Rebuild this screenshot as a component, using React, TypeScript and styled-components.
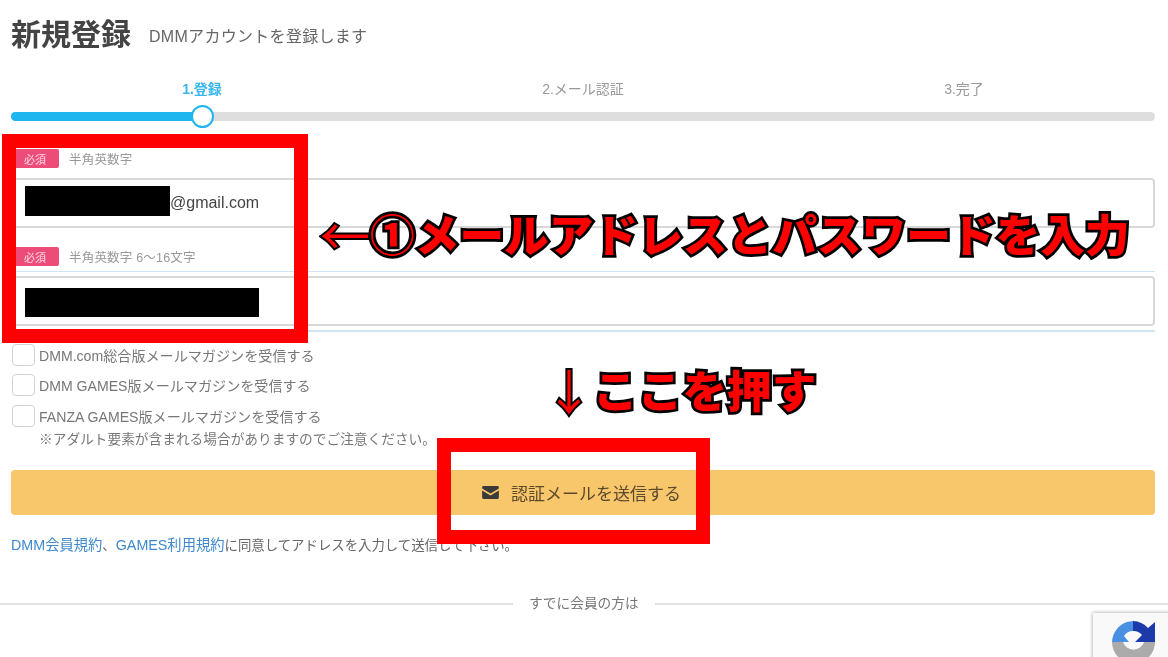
import React from "react";
import styled, { createGlobalStyle } from "styled-components";

const Global = createGlobalStyle`
  html, body { margin: 0; padding: 0; background: #fff; overflow: hidden; }
  body { font-family: "Liberation Sans", "Noto Sans CJK JP", sans-serif; color: #555; width: 1168px; height: 657px; }
`;

const Screen = styled.div`
  position: relative;
  width: 1168px;
  height: 657px;
  overflow: hidden;
`;

const Content = styled.main`
  width: 1168px;
  filter: blur(0.6px);
`;

const Form = styled.div`
  padding: 0 13px 0 11px;
`;

const Header = styled.header`
  display: flex;
  align-items: center;
  gap: 18px;
  height: 50px;
  padding-top: 10px;
`;

const Title = styled.h1`
  margin: 0;
  font-size: 30px;
  line-height: 50px;
  font-weight: 700;
  color: #444;
`;

const Subtitle = styled.p`
  margin: 0;
  font-size: 16px;
  letter-spacing: 0.3px;
  color: #666;
`;

const Steps = styled.div`
  display: grid;
  grid-template-columns: repeat(3, 120px);
  justify-content: start;
  column-gap: 261px;
  margin: 19px 0 0 131px;
`;

const Step = styled.span<{ $active?: boolean }>`
  text-align: center;
  font-size: 14px;
  line-height: 20px;
  font-weight: ${(p) => (p.$active ? 700 : 400)};
  color: ${(p) => (p.$active ? "#3ab6ee" : "#999")};
`;

const Track = styled.div`
  position: relative;
  height: 9px;
  margin-top: 13px;
  border-radius: 5px;
  background: #dedede;
`;

const TrackFill = styled.div`
  height: 100%;
  border-radius: 5px 0 0 5px;
  background: #1fb5ef;
`;

const Knob = styled.div`
  position: absolute;
  top: -7px;
  left: 180px;
  width: 23px;
  height: 23px;
  box-sizing: border-box;
  border: 2px solid #1fb5ef;
  border-radius: 50%;
  background: #fff;
`;

const LabelRow = styled.div<{ $top: number }>`
  display: flex;
  align-items: center;
  gap: 10px;
  height: 19px;
  margin-top: ${(p) => p.$top}px;
`;

const Badge = styled.span`
  display: flex;
  align-items: center;
  justify-content: center;
  width: 48px;
  height: 19px;
  border-radius: 2px;
  background: #ee4c78;
  color: #fbdbe4;
  font-size: 11px;
`;

const Hint = styled.span`
  font-size: 12.5px;
  letter-spacing: 0.2px;
  color: #999;
`;

const Glow = styled.div`
  margin-top: 5px;
  padding: 4px 0;
  border-top: 1.5px solid #cfe4f7;
  border-bottom: 2px solid #cfe4f7;
`;

const Input = styled.div<{ $top?: number }>`
  display: flex;
  align-items: center;
  box-sizing: border-box;
  height: 50px;
  margin-top: ${(p) => p.$top ?? 0}px;
  padding: 0 12px;
  border: 2px solid #d8d8d8;
  border-radius: 4px;
  background: #fff;
  font-size: 16px;
  color: #444;
`;

const Redaction = styled.span<{ $w: number; $h: number; $up?: number; $down?: number }>`
  display: block;
  width: ${(p) => p.$w}px;
  height: ${(p) => p.$h}px;
  margin-bottom: ${(p) => p.$up ?? 0}px;
  margin-top: ${(p) => p.$down ?? 0}px;
  background: #000;
`;

const Checks = styled.div`
  display: flex;
  flex-direction: column;
  margin-top: 12px;
  padding-left: 1px;
`;

const CheckRow = styled.label<{ $gap: number }>`
  display: flex;
  align-items: center;
  gap: 4px;
  height: 22px;
  margin-bottom: ${(p) => p.$gap}px;
  font-size: 14.1px;
  color: #777;
`;

const Box = styled.span`
  box-sizing: border-box;
  width: 23px;
  height: 22px;
  border: 1.5px solid #d2d2d2;
  border-radius: 4px;
  background: #fff;
`;

const Note = styled.p`
  margin: 3px 0 0 27px;
  font-size: 13.7px;
  line-height: 20px;
  color: #777;
`;

const Submit = styled.button`
  display: flex;
  align-items: center;
  justify-content: center;
  gap: 12px;
  width: 100%;
  height: 45px;
  margin-top: 20px;
  padding: 0 3px 0 0;
  border: 0;
  border-radius: 4px;
  background: #f8c66b;
  color: #5b4a2c;
  font-family: inherit;
  font-size: 17px;
`;

const Terms = styled.p`
  margin: 20px 0 0;
  font-size: 13.4px;
  line-height: 20px;
  color: #666;
`;

const TermsLink = styled.a`
  font-size: 14.3px;
  color: #3f88cc;
  text-decoration: none;
`;

const Divider = styled.div`
  display: flex;
  align-items: center;
  gap: 16px;
  margin-top: 38px;
  font-size: 13.7px;
  line-height: 20px;
  color: #777;
  &::before, &::after {
    content: "";
    flex: 1;
    height: 2px;
    background: #e2e2e2;
  }
  &::before { flex: 0 0 513px; }
`;

const Frame = styled.div<{ $x: number; $y: number; $w: number; $h: number; $b: number }>`
  position: absolute;
  left: ${(p) => p.$x}px;
  top: ${(p) => p.$y}px;
  width: ${(p) => p.$w}px;
  height: ${(p) => p.$h}px;
  box-sizing: border-box;
  border: ${(p) => p.$b}px solid #ff0000;
`;

const Callout = styled.div<{ $x: number; $y: number }>`
  position: absolute;
  left: ${(p) => p.$x}px;
  top: ${(p) => p.$y}px;
  display: flex;
  align-items: center;
  white-space: nowrap;
  font-family: "Noto Sans CJK JP", sans-serif;
  font-size: 44.7px;
  line-height: 56px;
  font-weight: 900;
  color: #ff0000;
  -webkit-text-stroke: 5.5px #000;
  paint-order: stroke fill;
  filter: blur(0.3px);
`;

const CalloutArrow = styled.span<{ $size: number }>`
  font-size: ${(p) => p.$size}px;
  font-weight: 400;
  -webkit-text-stroke: 4px #000;
  paint-order: stroke fill;
`;

const Recaptcha = styled.aside`
  position: absolute;
  left: 1093px;
  top: 613px;
  width: 90px;
  height: 60px;
  padding: 6px 0 0 18px;
  box-sizing: border-box;
  background: #f9f9f9;
  box-shadow: 0 0 4px rgba(0, 0, 0, 0.4);
`;

export default function App() {
  return (
    <Screen>
      <Global />
      <Content>
        <Form>
          <Header>
            <Title>新規登録</Title>
            <Subtitle>DMMアカウントを登録します</Subtitle>
          </Header>
          <Steps>
            <Step $active>1.登録</Step>
            <Step>2.メール認証</Step>
            <Step>3.完了</Step>
          </Steps>
          <Track>
            <TrackFill style={{ width: "191px" }} />
            <Knob />
          </Track>
          <LabelRow $top={28}>
            <Badge>必須</Badge>
            <Hint>半角英数字</Hint>
          </LabelRow>
          <Input $top={10}>
            <Redaction $w={145} $h={30} $up={4} />
            @gmail.com
          </Input>
          <LabelRow $top={19}>
            <Badge>必須</Badge>
            <Hint>半角英数字 6〜16文字</Hint>
          </LabelRow>
          <Glow>
            <Input>
              <Redaction $w={234} $h={29} $down={3} />
            </Input>
          </Glow>
          <Checks>
            <CheckRow $gap={8}>
              <Box />
              DMM.com総合版メールマガジンを受信する
            </CheckRow>
            <CheckRow $gap={9}>
              <Box />
              DMM GAMES版メールマガジンを受信する
            </CheckRow>
            <CheckRow $gap={0}>
              <Box />
              FANZA GAMES版メールマガジンを受信する
            </CheckRow>
            <Note>※アダルト要素が含まれる場合がありますのでご注意ください。</Note>
          </Checks>
          <Submit>
            <svg width="17" height="13" viewBox="0 0 18 14" aria-hidden="true">
              <path d="M1.5 0h15A1.5 1.5 0 0 1 18 1.5V2.6L9 8 0 2.6V1.5A1.5 1.5 0 0 1 1.5 0Z" fill="#3a3a3a" />
              <path d="M0 4.8 9 10.2l9-5.4v7.7a1.5 1.5 0 0 1-1.5 1.5h-15A1.5 1.5 0 0 1 0 12.5Z" fill="#3a3a3a" />
            </svg>
            認証メールを送信する
          </Submit>
          <Terms>
            <TermsLink href="#a">DMM会員規約</TermsLink>、<TermsLink href="#b">GAMES利用規約</TermsLink>に同意してアドレスを入力して送信して下さい。
          </Terms>
        </Form>
        <Divider>すでに会員の方は</Divider>
      </Content>

      <Frame $x={2} $y={134} $w={306} $h={209} $b={14} />
      <Frame $x={437} $y={438} $w={273} $h={106} $b={14} />

      <Callout $x={320} $y={205}>
        <CalloutArrow $size={50}>←</CalloutArrow>①メールアドレスとパスワードを入力
      </Callout>
      <Callout $x={545} $y={361}>
        <CalloutArrow $size={48}>↓</CalloutArrow>ここを押す
      </Callout>

      <Recaptcha>
        <svg width="46" height="46" viewBox="0 0 46 46" aria-hidden="true">
          <path d="M1 23A22 22 0 0 1 16 3L22 2V12A11 11 0 0 0 13 17L18 23Z" fill="#4a90e2" />
          <path d="M22 2A21 21 0 0 1 37 9L44 3V23H24L31 16A11 11 0 0 0 22 12Z" fill="#1c3aa9" />
          <path d="M1 23H12A11 11 0 0 0 33 23H44A21.5 21.5 0 0 1 1 23Z" fill="#ababab" />
        </svg>
      </Recaptcha>
    </Screen>
  );
}
